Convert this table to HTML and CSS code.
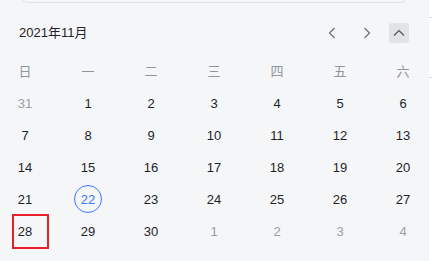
FILE: index.html
```html
<!DOCTYPE html>
<html lang="zh-CN">
<head>
<meta charset="utf-8">
<title>日历</title>
<link rel="stylesheet" href="styles.css">
</head>
<body>
<div class="input-edge"></div>
<div class="side-strip"><i class="side-line one"></i><i class="side-line two"></i></div>
<div class="calendar">
  <div class="cal-header">
    <div class="cal-title">2021年11月</div>
    <div class="cal-nav">
      <button class="nav-btn prev" aria-label="上个月"><svg width="8" height="12" viewBox="0 0 8 12"><path d="M6.5 1 L1.5 6 L6.5 11" fill="none" stroke="#6b6f76" stroke-width="1.2"/></svg></button>
      <button class="nav-btn" aria-label="下个月"><svg width="8" height="12" viewBox="0 0 8 12"><path d="M1.5 1 L6.5 6 L1.5 11" fill="none" stroke="#6b6f76" stroke-width="1.2"/></svg></button>
      <button class="nav-btn collapse" aria-label="收起"><svg width="12" height="8" viewBox="0 0 12 8"><path d="M1 6.5 L6 1.5 L11 6.5" fill="none" stroke="#50545b" stroke-width="1.2"/></svg></button>
    </div>
  </div>
  <div class="cal-grid">
    <div class="wd">日</div><div class="wd">一</div><div class="wd">二</div><div class="wd">三</div><div class="wd">四</div><div class="wd">五</div><div class="wd">六</div>
    <div class="day muted">31</div><div class="day">1</div><div class="day">2</div><div class="day">3</div><div class="day">4</div><div class="day">5</div><div class="day">6</div>
    <div class="day">7</div><div class="day">8</div><div class="day">9</div><div class="day">10</div><div class="day">11</div><div class="day">12</div><div class="day">13</div>
    <div class="day">14</div><div class="day">15</div><div class="day">16</div><div class="day">17</div><div class="day">18</div><div class="day">19</div><div class="day">20</div>
    <div class="day">21</div><div class="day"><span class="today">22</span></div><div class="day">23</div><div class="day">24</div><div class="day">25</div><div class="day">26</div><div class="day">27</div>
    <div class="day marked">28<span class="mark-box"></span></div><div class="day">29</div><div class="day">30</div><div class="day muted">1</div><div class="day muted">2</div><div class="day muted">3</div><div class="day muted">4</div>
  </div>
</div>
</body>
</html>
```

FILE: styles.css
```css
html, body {
  margin: 0;
  padding: 0;
}
body {
  width: 432px;
  height: 261px;
  overflow: hidden;
  background: #f5f6f8;
  position: relative;
  font-family: "Liberation Sans", "Noto Sans CJK SC", sans-serif;
  color: #1f2329;
}
.input-edge {
  position: absolute;
  left: 20px;
  top: -30px;
  width: 386px;
  height: 31px;
  border: 1px solid #dfe1e5;
  border-radius: 8px;
}
.side-strip {
  position: absolute;
  right: 0;
  top: 0;
  width: 3px;
  height: 261px;
  background: #ffffff;
}
.side-line {
  position: absolute;
  left: 0;
  width: 3px;
  height: 1px;
  background: #d8dade;
}
.side-line.one { top: 17px; }
.side-line.two { top: 77px; }
.calendar {
  padding-top: 23px;
}
.cal-header {
  display: flex;
  align-items: center;
  justify-content: space-between;
  height: 20px;
  padding-left: 19px;
  padding-right: 23px;
}
.cal-title {
  font-size: 13px;
  color: #1f2329;
  line-height: 20px;
}
.cal-nav {
  display: flex;
  align-items: center;
  gap: 12px;
}
.nav-btn {
  width: 20px;
  height: 20px;
  padding: 0;
  border: 0;
  background: transparent;
  display: flex;
  align-items: center;
  justify-content: center;
  border-radius: 3px;
}
.nav-btn.prev {
  margin-right: 3px;
}
.nav-btn.collapse {
  background: #e1e3e7;
}
.cal-grid {
  margin-top: 12px;
  padding-left: 12px;
  display: grid;
  grid-template-columns: repeat(7, 26px);
  column-gap: 37px;
  grid-auto-rows: 32px;
}
.wd, .day {
  display: flex;
  align-items: center;
  justify-content: center;
  font-size: 13px;
}
.wd {
  color: #8f959e;
  height: 31px;
}
.day {
  color: #1f2329;
}
.day.muted {
  color: #9a9ea6;
}
.today {
  flex: none;
  width: 28px;
  height: 28px;
  box-sizing: border-box;
  border: 1px solid #3c78f5;
  border-radius: 50%;
  color: #3c78f5;
  display: flex;
  align-items: center;
  justify-content: center;
}
.day.marked {
  position: relative;
}
.mark-box {
  position: absolute;
  left: 0;
  top: -1px;
  width: 37px;
  height: 35px;
  box-sizing: border-box;
  border: 2px solid #e5202a;
}
```
